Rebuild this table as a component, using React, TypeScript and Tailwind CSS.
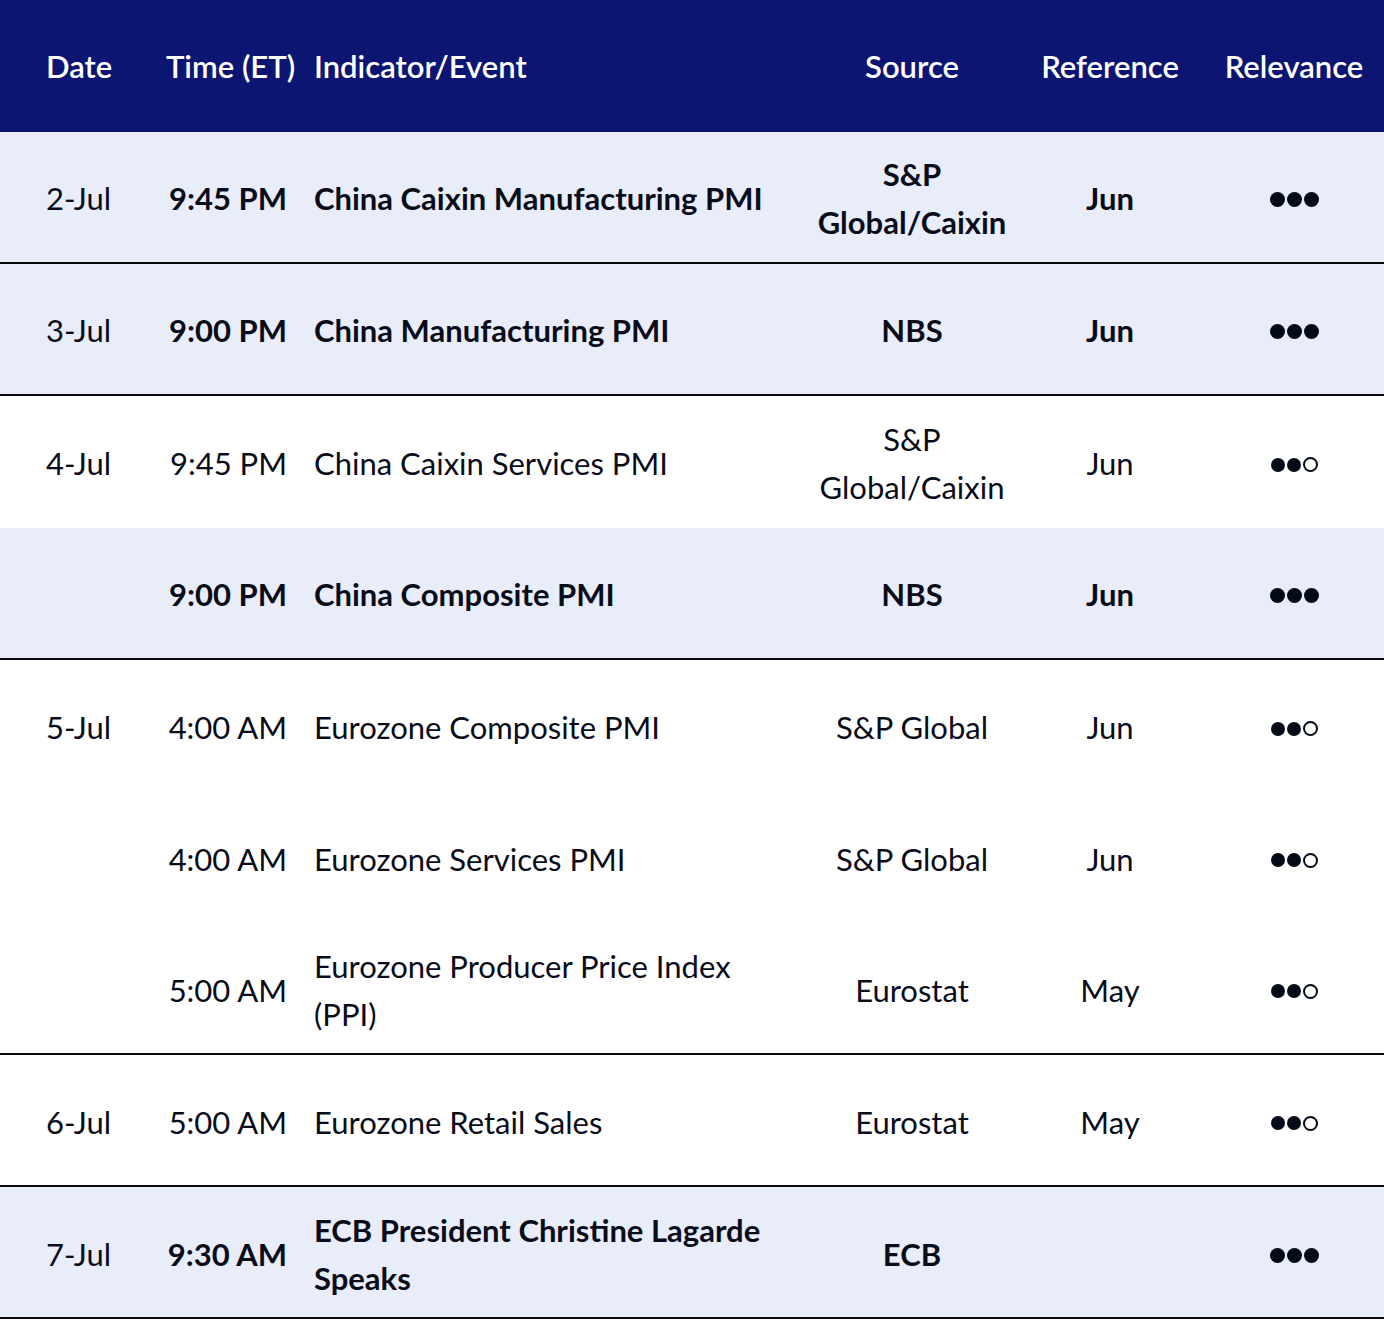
import React from "react";

type Row = {
  date?: string;
  time: string;
  event: React.ReactNode;
  source: React.ReactNode;
  ref: string;
  dots: number;
  bold: boolean;
};

type Group = { rows: Row[] };

const groups: Group[] = [
  {
    rows: [
      {
        date: "2-Jul",
        time: "9:45 PM",
        event: "China Caixin Manufacturing PMI",
        source: (
          <>
            S&amp;P
            <br />
            Global/Caixin
          </>
        ),
        ref: "Jun",
        dots: 3,
        bold: true,
      },
    ],
  },
  {
    rows: [
      { date: "3-Jul", time: "9:00 PM", event: "China Manufacturing PMI", source: "NBS", ref: "Jun", dots: 3, bold: true },
    ],
  },
  {
    rows: [
      {
        date: "4-Jul",
        time: "9:45 PM",
        event: "China Caixin Services PMI",
        source: (
          <>
            S&amp;P
            <br />
            Global/Caixin
          </>
        ),
        ref: "Jun",
        dots: 2,
        bold: false,
      },
      { time: "9:00 PM", event: "China Composite PMI", source: "NBS", ref: "Jun", dots: 3, bold: true },
    ],
  },
  {
    rows: [
      { date: "5-Jul", time: "4:00 AM", event: "Eurozone Composite PMI", source: "S&P Global", ref: "Jun", dots: 2, bold: false },
      { time: "4:00 AM", event: "Eurozone Services PMI", source: "S&P Global", ref: "Jun", dots: 2, bold: false },
      {
        time: "5:00 AM",
        event: (
          <>
            Eurozone Producer Price Index
            <br />
            (PPI)
          </>
        ),
        source: "Eurostat",
        ref: "May",
        dots: 2,
        bold: false,
      },
    ],
  },
  {
    rows: [
      { date: "6-Jul", time: "5:00 AM", event: "Eurozone Retail Sales", source: "Eurostat", ref: "May", dots: 2, bold: false },
    ],
  },
  {
    rows: [
      {
        date: "7-Jul",
        time: "9:30 AM",
        event: (
          <>
            ECB President Christine Lagarde
            <br />
            Speaks
          </>
        ),
        source: "ECB",
        ref: "",
        dots: 3,
        bold: true,
      },
    ],
  },
];

function Dots({ count, bold }: { count: number; bold: boolean }) {
  const size = bold ? "w-[15px] h-[15px]" : "w-[14px] h-[14px]";
  return (
    <div className="flex items-center gap-[2px] mt-[3px]">
      {[0, 1, 2].map((i) =>
        i < count ? (
          <span key={i} className={`${size} rounded-full bg-[#050a18]`} />
        ) : (
          <span key={i} className="w-[15px] h-[15px] rounded-full border-2 border-[#050a18]" />
        )
      )}
    </div>
  );
}

const cols = "grid grid-cols-[150px_150px_500px_224px_172px_188px]";

export default function App() {
  return (
    <div
      className="w-[1384px] h-[1321px] bg-white text-[#0a0c1a] text-[31px] leading-[48px]"
      style={{ fontFamily: "Lato, 'Open Sans', sans-serif" }}
    >
      <div className={`${cols} h-[132px] bg-[#0c1672] text-white font-semibold items-center`}>
        <div className="pl-[46px]">Date</div>
        <div className="pl-[16px] whitespace-nowrap">Time (ET)</div>
        <div className="pl-[14px]">Indicator/Event</div>
        <div className="text-center">Source</div>
        <div className="text-center">Reference</div>
        <div className="text-center pl-[8px]">Relevance</div>
      </div>
      {groups.map((g, gi) => (
        <div key={gi}>
          {g.rows.map((r, ri) => (
            <div
              key={ri}
              className={`${cols} items-center h-[131.9px] pt-[3px] ${
                ri === g.rows.length - 1 ? "border-b-2 border-[#0a0a0a]" : ""
              } ${r.bold ? "bg-[#e8edf9]" : "bg-white"}`}
            >
              <div className="pl-[46px]">{r.date}</div>
              <div className={`text-right pr-[13px] whitespace-nowrap ${r.bold ? "font-bold" : ""}`}>{r.time}</div>
              <div className={`pl-[14px] ${r.bold ? "font-bold" : ""}`}>{r.event}</div>
              <div className={`text-center ${r.bold ? "font-bold" : ""}`}>{r.source}</div>
              <div className={`text-center ${r.bold ? "font-bold" : ""}`}>{r.ref}</div>
              <div className="flex justify-center pl-[8px]">
                <Dots count={r.dots} bold={r.bold} />
              </div>
            </div>
          ))}
        </div>
      ))}
    </div>
  );
}
